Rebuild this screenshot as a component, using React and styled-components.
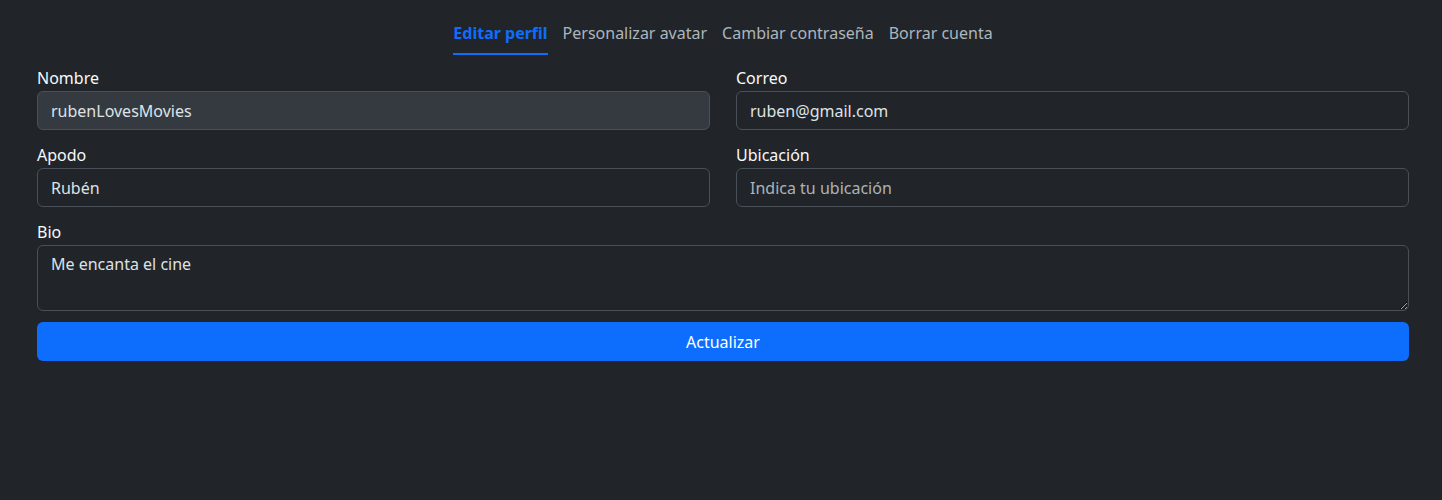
import React from "react";
import styled, { createGlobalStyle } from "styled-components";

const GlobalStyle = createGlobalStyle`
  html, body {
    margin: 0;
    background: #212529;
    color: #dee2e6;
    font-family: "Noto Sans", "Open Sans", sans-serif;
    font-size: 16px;
  }
  * { box-sizing: border-box; }
`;

const tabs = ["Editar perfil", "Personalizar avatar", "Cambiar contraseña", "Borrar cuenta"];

const App = () => {
  return (
    <>
      <GlobalStyle />
      <Page>
        <Tabs>
          {tabs.map((t, i) => (
            <Tab key={t} active={i === 0}>{t}</Tab>
          ))}
        </Tabs>
        <Form>
          <Field>
            <Label>Nombre</Label>
            <Input disabled defaultValue="rubenLovesMovies" />
          </Field>
          <Field>
            <Label>Correo</Label>
            <Input defaultValue="ruben@gmail.com" />
          </Field>
          <Field>
            <Label>Apodo</Label>
            <Input defaultValue="Rubén" />
          </Field>
          <Field>
            <Label>Ubicación</Label>
            <Input placeholder="Indica tu ubicación" />
          </Field>
          <Field wide>
            <Label>Bio</Label>
            <TextArea defaultValue="Me encanta el cine" />
          </Field>
          <Button>Actualizar</Button>
        </Form>
      </Page>
    </>
  );
};

const Page = styled.div`
  padding: 0 33px 0 37px;
`;

const Tabs = styled.nav`
  display: flex;
  justify-content: center;
  gap: 15px;
  padding-top: 21px;
`;

const Tab = styled.a`
  line-height: 24px;
  padding-bottom: 8px;
  cursor: pointer;
  color: ${(props) => (props.active ? "#0d6efd" : "#adb5bd")};
  font-weight: ${(props) => (props.active ? 700 : 400)};
  border-bottom: 2px solid ${(props) => (props.active ? "#0d6efd" : "transparent")};
`;

const Form = styled.form`
  display: grid;
  grid-template-columns: 1fr 1fr;
  column-gap: 26px;
  row-gap: 13px;
  margin-top: 11px;
`;

const Field = styled.div`
  display: flex;
  flex-direction: column;
  grid-column: ${(props) => (props.wide ? "1 / -1" : "auto")};
`;

const Label = styled.label`
  line-height: 24px;
  margin-bottom: 1px;
  color: #f8f9fa;
`;

const Input = styled.input`
  height: 39px;
  padding: 6px 13px;
  font: inherit;
  color: #dee2e6;
  background: ${(props) => (props.disabled ? "#343a40" : "#212529")};
  border: 1px solid #495057;
  border-radius: 6px;
  outline: none;

  &::placeholder {
    color: rgba(222, 226, 230, 0.75);
  }
`;

const TextArea = styled.textarea`
  height: 66px;
  padding: 6px 13px;
  font: inherit;
  line-height: 24px;
  color: #dee2e6;
  background: #212529;
  border: 1px solid #495057;
  border-radius: 6px;
  outline: none;
`;

const Button = styled.button`
  grid-column: 1 / -1;
  margin-top: -2px;
  height: 39px;
  font: inherit;
  color: #ffffff;
  background: #0d6efd;
  border: 0;
  border-radius: 6px;
`;

export default App;
